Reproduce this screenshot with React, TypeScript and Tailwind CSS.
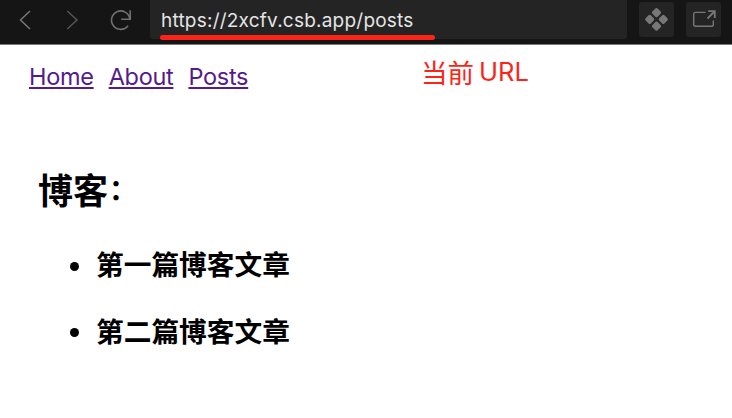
const navLinks = ["Home", "About", "Posts"];
const posts = ["第一篇博客文章", "第二篇博客文章"];

function BrowserBar() {
  return (
    <header className="flex h-[45px] w-full items-start border-b border-[#777] bg-[#151515]">
      <svg className="h-[43px] w-[150px] shrink-0" viewBox="0 0 150 43" fill="none" strokeWidth="1.5">
        <path d="M30 11L20.5 20L30 29" stroke="#777" />
        <path d="M67.3 11L77 20L67.3 29" stroke="#565656" />
        <path d="M130.2 10.3V19.2H121.2M129.8 18.7A9.2 9.2 0 1 0 128 25.8" stroke="#707070" strokeWidth="1.6" />
      </svg>
      <div className="relative flex h-[39px] w-[477px] shrink-0 items-center rounded-b-[3px] bg-[#242424] pl-[11px]">
        <span className="whitespace-nowrap pt-[2px] font-['Inter','Liberation_Sans',sans-serif] text-[19px] leading-[38px] tracking-[0.22px] text-[#e5e5e5]">
          https://2xcfv.csb.app/posts
        </span>
        <div className="absolute left-[10px] top-[35px] h-[5px] w-[275px] rounded-full bg-[#fc2418]" />
      </div>
      <div className="ml-[12px] mt-[2px] flex gap-[12px]">
        <button className="size-[35px] rounded-[3px] bg-[#242424]" aria-label="Sandbox">
          <svg viewBox="0 0 35 35" fill="#777">
            <rect x="-3.7" y="-3.7" width="7.4" height="7.4" rx="1.6" transform="translate(17.5 10.7) rotate(45)" />
            <rect x="-3.7" y="-3.7" width="7.4" height="7.4" rx="1.6" transform="translate(10.7 17.4) rotate(45)" />
            <rect x="-3.7" y="-3.7" width="7.4" height="7.4" rx="1.6" transform="translate(24.3 17.4) rotate(45)" />
            <rect x="-3.7" y="-3.7" width="7.4" height="7.4" rx="1.6" transform="translate(17.5 24.1) rotate(45)" />
          </svg>
        </button>
        <button className="size-[35px] rounded-[3px] bg-[#242424]" aria-label="Open in new window">
          <svg viewBox="0 0 35 35" fill="none" stroke="#777" strokeWidth="1.4">
            <path d="M19.5 10.4H9.5Q7.7 10.4 7.7 12.2V22.5Q7.7 24.3 9.5 24.3H25.5Q27.3 24.3 27.3 22.5V18.5" />
            <path d="M22.2 9.2H28.8V16M28.5 9.5L21.5 16.5" strokeWidth="1.8" />
          </svg>
        </button>
      </div>
    </header>
  );
}

export default function App() {
  return (
    <div className="h-[418px] w-[732px] overflow-hidden bg-white">
      <BrowserBar />
      <div className="flex h-[59px] items-start pl-[29px] pt-[17px]">
        <nav className="flex w-[392px] gap-[15px] font-['Inter','Liberation_Sans',sans-serif] text-[23.5px] leading-[30px] tracking-[-0.3px] text-[#551a8b]">
          {navLinks.map((label) => (
            <a key={label} href="#" className="underline decoration-[1.5px] underline-offset-[2px]">
              {label}
            </a>
          ))}
        </nav>
        <p className="-mt-[6px] flex items-center gap-[5px] text-[26.5px] leading-[30px] text-[#fc2418]">
          <span className="font-['Noto_Sans_CJK_SC',sans-serif] font-normal">当前</span>
          <span className="mt-px font-['Inter',sans-serif] text-[25.5px]">URL</span>
        </p>
      </div>
      <main className="pl-[38px] pt-[65px] font-['Noto_Sans_CJK_SC',sans-serif] font-bold text-black">
        <h1 className="flex h-[40px] text-[35px] leading-[40px]">
          博客<span className="ml-px text-[28px] leading-[39px]">：</span>
        </h1>
        <ul className="mt-[34px] flex flex-col gap-[26.7px]">
          {posts.map((post) => (
            <li key={post} className="flex items-center pl-[31.5px] text-[27.7px] leading-[40px]">
              <span className="mr-[17.5px] mt-[6px] size-[9px] rounded-full bg-black" />
              {post}
            </li>
          ))}
        </ul>
      </main>
    </div>
  );
}
